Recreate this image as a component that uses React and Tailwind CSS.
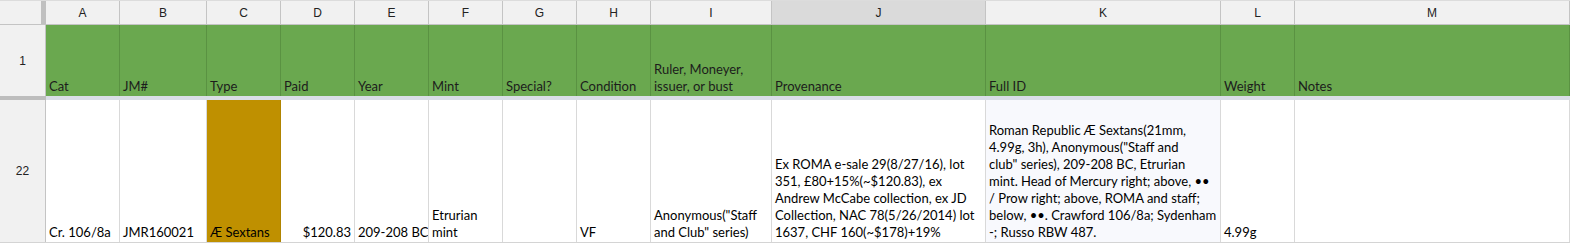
import React from "react";

const cols = [
  { key: "A", w: "w-[74px]", head: "Cat", val: ["Cr. 106/8a"] },
  { key: "B", w: "w-[87px]", head: "JM#", val: ["JMR160021"] },
  { key: "C", w: "w-[74px]", head: "Type", val: ["Æ Sextans"], bg: "bg-[#bf9000] border-[#b08400]" },
  { key: "D", w: "w-[74px]", head: "Paid", val: ["$120.83"], right: true },
  { key: "E", w: "w-[74px]", head: "Year", val: ["209-208 BC"] },
  { key: "F", w: "w-[74px]", head: "Mint", val: ["Etrurian", "mint"] },
  { key: "G", w: "w-[74px]", head: "Special?", val: [] },
  { key: "H", w: "w-[74px]", head: "Condition", val: ["VF"] },
  {
    key: "I",
    w: "w-[121px]",
    head: ["Ruler, Moneyer,", "issuer, or bust"],
    val: ['Anonymous("Staff', 'and Club" series)'],
  },
  {
    key: "J",
    w: "w-[214px]",
    head: "Provenance",
    active: true,
    val: [
      "Ex ROMA e-sale 29(8/27/16), lot",
      "351, £80+15%(~$120.83), ex",
      "Andrew McCabe collection, ex JD",
      "Collection, NAC 78(5/26/2014) lot",
      "1637, CHF 160(~$178)+19%",
    ],
  },
  {
    key: "K",
    w: "w-[235px]",
    head: "Full ID",
    bg: "bg-[#f8f9fd] border-[#d9d9d9]",
    val: [
      "Roman Republic Æ Sextans(21mm,",
      '4.99g, 3h), Anonymous("Staff and',
      'club" series), 209-208 BC, Etrurian',
      "mint. Head of Mercury right; above, ••",
      "/ Prow right; above, ROMA and staff;",
      "below, ••. Crawford 106/8a; Sydenham",
      "-; Russo RBW 487.",
    ],
  },
  { key: "L", w: "w-[74px]", head: "Weight", val: ["4.99g"] },
  { key: "M", w: "flex-1", head: "Notes", val: [] },
];

const cellFont = { fontFamily: "Lato, 'Open Sans', sans-serif" };

const Lines = ({ lines }) => (
  <>
    {(Array.isArray(lines) ? lines : [lines]).map((l, i) => (
      <div key={i} className="whitespace-nowrap leading-[17px]">
        {l}
      </div>
    ))}
  </>
);

export default function App() {
  return (
    <div className="w-[1570px] h-[244px] bg-white overflow-hidden font-['Liberation_Sans',Arial,sans-serif]">
      {/* column letters */}
      <div className="flex h-[25px] border-t border-[#dcdcdc] border-b border-b-[#c4c4c4] bg-[#f1f1f1]">
        <div className="w-[46px] flex shrink-0">
          <div className="w-[41px]" />
          <div className="w-[5px] bg-[#c0c0c0]" />
        </div>
        {cols.map((c) => (
          <div
            key={c.key}
            className={`${c.w} shrink-0 border-r border-[#c4c4c4] flex items-center justify-center text-[12px] text-[#222] ${
              c.active ? "bg-[#dadada]" : ""
            }`}
          >
            {c.key}
          </div>
        ))}
      </div>

      {/* row 1 */}
      <div className="flex h-[71px]">
        <div className="w-[46px] shrink-0 bg-[#f1f1f1] border-r border-[#c4c4c4] flex items-center justify-center text-[12px] text-[#222]">
          1
        </div>
        {cols.map((c) => (
          <div
            key={c.key}
            style={cellFont}
            className={`${c.w} shrink-0 bg-[#6aa84f] border-r border-[#5a9242] flex flex-col justify-end px-[3px] pb-[1px] text-[13px] text-[#1c1c1c] overflow-hidden`}
          >
            <Lines lines={c.head} />
          </div>
        ))}
      </div>

      {/* frozen divider */}
      <div className="flex h-[4px]">
        <div className="w-[46px] shrink-0 bg-[#bdbdbd]" />
        <div className="flex-1 bg-[#dadee7]" />
      </div>

      {/* row 22 */}
      <div className="flex h-[143px] border-b border-[#d4d4d4]">
        <div className="w-[46px] shrink-0 bg-[#f1f1f1] border-r border-[#c4c4c4] flex items-center justify-center text-[12px] text-[#222]">
          22
        </div>
        {cols.map((c) => (
          <div
            key={c.key}
            style={cellFont}
            className={`${c.w} shrink-0 border-r ${c.bg ? c.bg : "bg-white border-[#d9d9d9]"} flex flex-col justify-end px-[3px] pb-[1px] text-[13px] text-black overflow-hidden ${
              c.right ? "items-end" : ""
            }`}
          >
            <Lines lines={c.val} />
          </div>
        ))}
      </div>
    </div>
  );
}
